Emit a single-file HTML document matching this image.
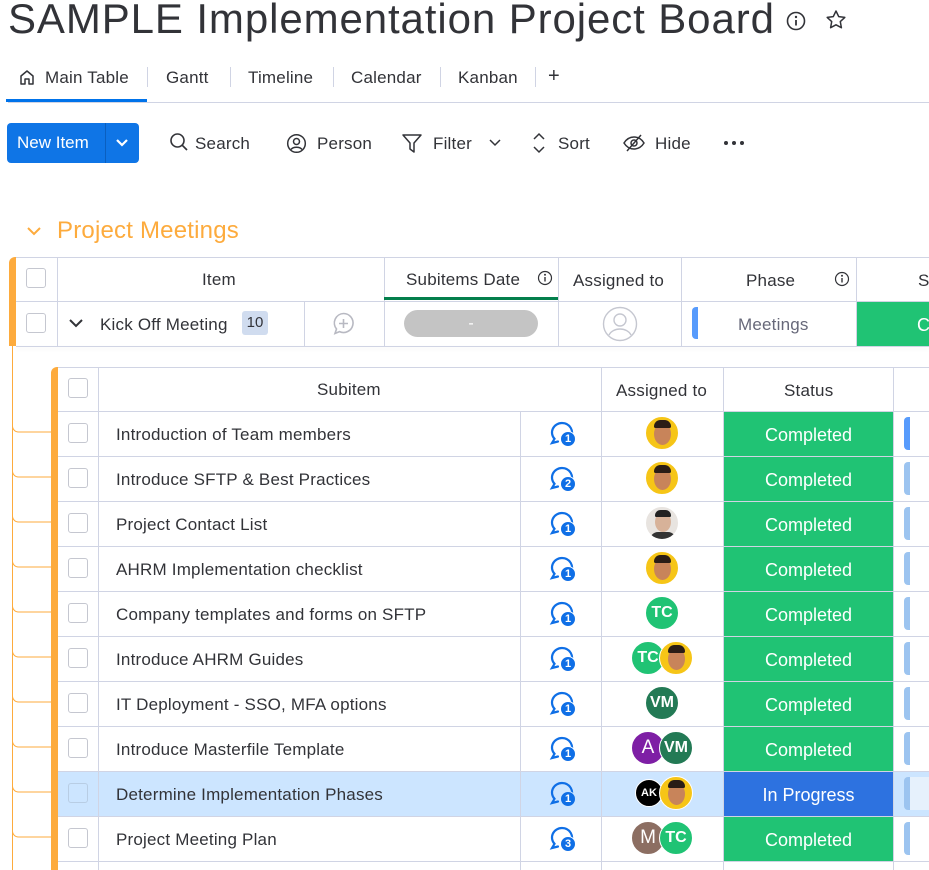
<!DOCTYPE html>
<html><head><meta charset="utf-8"><style>
*{box-sizing:border-box;margin:0;padding:0}
body{width:929px;height:870px;overflow:hidden;background:#fff;font-family:"Liberation Sans",sans-serif;color:#323338;position:relative}
.a{position:absolute}
.t{font-size:17px;color:#323338;white-space:nowrap;letter-spacing:0.2px}
.cb{position:absolute;width:20px;height:20px;border:1px solid #c5c7d0;border-radius:3px;background:#fff}
.vl{position:absolute;width:1px;background:#d0d4e4}
.hl{position:absolute;height:1px;background:#d0d4e4}
.st{position:absolute;background:#20c374;color:#fff;font-size:18px;display:flex;align-items:center;justify-content:center;padding-top:2px}
.av{position:absolute;width:34px;height:34px;border-radius:50%;color:#fff;font-weight:bold;font-size:16px;display:flex;align-items:center;justify-content:center;border:1px solid #fff}
.ph{background:#f6c517;overflow:hidden}
.ph:before{content:"";position:absolute;left:8px;top:6px;width:17px;height:22px;border-radius:50%;background:#c8845a}
.ph:after{content:"";position:absolute;left:8px;top:3px;width:17px;height:8px;border-radius:8px 8px 2px 2px;background:#2a1d16}
.bar{position:absolute;width:6px;border-radius:4px 0 0 4px;background:#9cc4f0}
.bd{position:absolute;left:12px;top:12px;width:16px;height:16px;border-radius:50%;background:#0f6fe6;border:1.5px solid #fff;color:#fff;font-size:11px;font-weight:bold;text-align:center;line-height:14px}
</style></head><body>
<div class="a" style="left:8px;top:-5px;font-size:42px;color:#323338;letter-spacing:0.9px">SAMPLE Implementation Project Board</div>
<svg class="a" style="left:785px;top:10px" width="22" height="22" viewBox="0 0 22 22"><circle cx="11" cy="11" r="8.5" fill="none" stroke="#323338" stroke-width="1.6"/><line x1="11" y1="10" x2="11" y2="15.5" stroke="#323338" stroke-width="1.8"/><circle cx="11" cy="7" r="1.2" fill="#323338"/></svg>
<svg class="a" style="left:824px;top:8px" width="24" height="24" viewBox="0 0 24 24"><path d="M12 3l2.7 5.6 6.1.8-4.5 4.2 1.1 6.1L12 16.8 6.6 19.7l1.1-6.1L3.2 9.4l6.1-.8z" fill="none" stroke="#323338" stroke-width="1.5" stroke-linejoin="round"/></svg>

<svg class="a" style="left:18px;top:68px" width="18" height="18" viewBox="0 0 18 18"><path d="M3 8l6-5 6 5v8h-4v-5H7v5H3z" fill="none" stroke="#323338" stroke-width="1.5" stroke-linejoin="round"/></svg>
<div class="a t" style="left:45px;top:68px">Main Table</div>
<div class="vl" style="left:147px;top:67px;height:20px"></div>
<div class="a t" style="left:166px;top:68px">Gantt</div>
<div class="vl" style="left:230px;top:67px;height:20px"></div>
<div class="a t" style="left:248px;top:68px">Timeline</div>
<div class="vl" style="left:333px;top:67px;height:20px"></div>
<div class="a t" style="left:351px;top:68px">Calendar</div>
<div class="vl" style="left:440px;top:67px;height:20px"></div>
<div class="a t" style="left:458px;top:68px">Kanban</div>
<div class="vl" style="left:535px;top:67px;height:20px"></div>
<div class="a t" style="left:548px;top:65px;font-size:20px">+</div>
<div class="hl" style="left:8px;top:102px;width:921px"></div>
<div class="a" style="left:6px;top:99px;width:141px;height:3px;background:#0073ea"></div>

<div class="a" style="left:7px;top:123px;width:132px;height:40px;background:#0f75e6;border-radius:4px"></div>
<div class="a" style="left:105px;top:123px;width:1px;height:40px;background:#0a5fc0"></div>
<div class="a" style="left:17px;top:133px;color:#fff;font-size:17px">New Item</div>
<svg class="a" style="left:114px;top:136px" width="16" height="14" viewBox="0 0 16 14"><path d="M3 4l5 5 5-5" fill="none" stroke="#fff" stroke-width="2.2"/></svg>
<svg class="a" style="left:169px;top:132px" width="20" height="20" viewBox="0 0 20 20"><circle cx="8.5" cy="8.5" r="6.5" fill="none" stroke="#323338" stroke-width="1.6"/><line x1="13.3" y1="13.3" x2="18" y2="18" stroke="#323338" stroke-width="1.7"/></svg>
<div class="a t" style="left:195px;top:134px">Search</div>
<svg class="a" style="left:286px;top:133px" width="21" height="21" viewBox="0 0 21 21"><circle cx="10.5" cy="10.5" r="8.8" fill="none" stroke="#323338" stroke-width="1.5"/><circle cx="10.5" cy="8.5" r="3" fill="none" stroke="#323338" stroke-width="1.5"/><path d="M5 16.5c2-3 9-3 11 0" fill="none" stroke="#323338" stroke-width="1.5"/></svg>
<div class="a t" style="left:317px;top:134px">Person</div>
<svg class="a" style="left:401px;top:132px" width="22" height="22" viewBox="0 0 22 22"><path d="M2 3h18l-7 8v9l-4-3v-6z" fill="none" stroke="#323338" stroke-width="1.5" stroke-linejoin="round"/></svg>
<div class="a t" style="left:433px;top:134px">Filter</div>
<svg class="a" style="left:488px;top:138px" width="14" height="10" viewBox="0 0 14 10"><path d="M2 2l5 5 5-5" fill="none" stroke="#323338" stroke-width="1.5"/></svg>
<svg class="a" style="left:531px;top:132px" width="16" height="22" viewBox="0 0 16 22"><path d="M3 7l5-5 5 5M3 15l5 5 5-5" fill="none" stroke="#323338" stroke-width="1.5"/></svg>
<div class="a t" style="left:558px;top:134px">Sort</div>
<svg class="a" style="left:622px;top:133px" width="24" height="20" viewBox="0 0 24 20"><path d="M2 10c5-8 15-8 20 0c-5 8-15 8-20 0z" fill="none" stroke="#323338" stroke-width="1.5"/><circle cx="12" cy="10" r="3" fill="none" stroke="#323338" stroke-width="1.5"/><line x1="5" y1="18" x2="19" y2="2" stroke="#323338" stroke-width="1.5"/></svg>
<div class="a t" style="left:655px;top:134px">Hide</div>
<div class="a" style="left:724px;top:141px;width:4px;height:4px;border-radius:50%;background:#323338"></div>
<div class="a" style="left:732px;top:141px;width:4px;height:4px;border-radius:50%;background:#323338"></div>
<div class="a" style="left:740px;top:141px;width:4px;height:4px;border-radius:50%;background:#323338"></div>

<svg class="a" style="left:26px;top:224px" width="16" height="14" viewBox="0 0 16 14"><path d="M2 4l6 6 6-6" fill="none" stroke="#fdab3d" stroke-width="2"/></svg>
<div class="a" style="left:57px;top:217px;font-size:24px;color:#fdab3d;letter-spacing:0.2px">Project Meetings</div>

<!-- top table -->
<div class="a" style="left:9px;top:257px;width:7px;height:89px;background:#fdab3d;border-radius:6px 0 0 0"></div>
<div class="hl" style="left:16px;top:257px;width:913px"></div>
<div class="hl" style="left:16px;top:301px;width:913px"></div>
<div class="hl" style="left:16px;top:346px;width:913px;box-shadow:0 2px 4px rgba(0,0,0,.08)"></div>
<div class="vl" style="left:57px;top:257px;height:89px"></div>
<div class="vl" style="left:304px;top:301px;height:45px"></div>
<div class="vl" style="left:384px;top:257px;height:89px"></div>
<div class="vl" style="left:558px;top:257px;height:89px"></div>
<div class="vl" style="left:681px;top:257px;height:89px"></div>
<div class="vl" style="left:856px;top:257px;height:89px"></div>
<div class="a" style="left:384px;top:297px;width:174px;height:3px;background:#037f4c"></div>
<div class="cb" style="left:26px;top:268px"></div>
<div class="cb" style="left:26px;top:313px"></div>
<div class="a t" style="left:202px;top:270px">Item</div>
<div class="a t" style="left:406px;top:270px">Subitems Date</div>
<svg class="a" style="left:537px;top:270px" width="16" height="16" viewBox="0 0 16 16"><circle cx="8" cy="8" r="6.5" fill="none" stroke="#323338" stroke-width="1.2"/><line x1="8" y1="7" x2="8" y2="11.5" stroke="#323338" stroke-width="1.4"/><circle cx="8" cy="4.8" r="1" fill="#323338"/></svg>
<div class="a t" style="left:573px;top:271px">Assigned to</div>
<div class="a t" style="left:746px;top:271px">Phase</div>
<svg class="a" style="left:834px;top:271px" width="16" height="16" viewBox="0 0 16 16"><circle cx="8" cy="8" r="6.5" fill="none" stroke="#323338" stroke-width="1.2"/><line x1="8" y1="7" x2="8" y2="11.5" stroke="#323338" stroke-width="1.4"/><circle cx="8" cy="4.8" r="1" fill="#323338"/></svg>
<div class="a t" style="left:918px;top:271px">S</div>
<svg class="a" style="left:68px;top:317px" width="16" height="12" viewBox="0 0 16 12"><path d="M2 3l6 6 6-6" fill="none" stroke="#323338" stroke-width="2"/></svg>
<div class="a t" style="left:100px;top:315px">Kick Off Meeting</div>
<div class="a" style="left:242px;top:311px;width:26px;height:24px;background:#d0dcef;border-radius:3px;font-size:15px;text-align:center;line-height:24px;color:#323338">10</div>
<svg class="a" style="left:331px;top:311px" width="25" height="25" viewBox="0 0 25 25"><path d="M12.5 2.5a9.5 9.5 0 1 1-4 18.1L4 22.5l1.5-4.5A9.5 9.5 0 0 1 12.5 2.5z" fill="none" stroke="#b8b9c2" stroke-width="1.6"/><path d="M12.5 8v9M8 12.5h9" stroke="#b8b9c2" stroke-width="1.6"/></svg>
<div class="a" style="left:404px;top:310px;width:134px;height:27px;background:#c4c4c4;border-radius:14px;color:#fff;text-align:center;line-height:27px;font-size:16px">-</div>
<svg class="a" style="left:602px;top:306px" width="36" height="36" viewBox="0 0 36 36"><circle cx="18" cy="18" r="16.5" fill="none" stroke="#c5c7d0" stroke-width="1.4"/><circle cx="18" cy="14" r="6" fill="none" stroke="#c5c7d0" stroke-width="1.4"/><path d="M7 29c4-8 18-8 22 0" fill="none" stroke="#c5c7d0" stroke-width="1.4"/></svg>
<div class="bar" style="left:692px;top:307px;height:32px;background:#579bfc"></div>
<div class="a t" style="left:738px;top:315px;color:#676879">Meetings</div>
<div class="st" style="left:857px;top:302px;width:72px;height:44px;justify-content:flex-start;padding-left:60px">Co</div>

<!-- tree -->
<div class="a" style="left:12px;top:346px;width:1px;height:524px;background:#fdab3d"></div>
<svg class="a" style="left:12px;top:346px" width="40" height="524" viewBox="0 0 40 524" fill="none" stroke="#fdab3d" stroke-width="1">
<path d="M0.5 70v10a6 6 0 0 0 6 6H39"/><path d="M0.5 115v10a6 6 0 0 0 6 6H39"/><path d="M0.5 160v10a6 6 0 0 0 6 6H39"/><path d="M0.5 205v10a6 6 0 0 0 6 6H39"/><path d="M0.5 250v10a6 6 0 0 0 6 6H39"/><path d="M0.5 295v10a6 6 0 0 0 6 6H39"/><path d="M0.5 340v10a6 6 0 0 0 6 6H39"/><path d="M0.5 385v10a6 6 0 0 0 6 6H39"/><path d="M0.5 430v10a6 6 0 0 0 6 6H39"/><path d="M0.5 475v10a6 6 0 0 0 6 6H39"/>
</svg>

<!-- subtable -->
<div class="a" style="left:51px;top:367px;width:7px;height:503px;background:#fdab3d;border-radius:6px 0 0 0"></div>
<div class="a" style="left:58px;top:771px;width:871px;height:45px;background:#cce5ff"></div>
<div class="hl" style="left:58px;top:367px;width:871px"></div>
<div class="hl" style="left:58px;top:411px;width:871px"></div>
<div class="hl" style="left:58px;top:456px;width:871px"></div>
<div class="hl" style="left:58px;top:501px;width:871px"></div>
<div class="hl" style="left:58px;top:546px;width:871px"></div>
<div class="hl" style="left:58px;top:591px;width:871px"></div>
<div class="hl" style="left:58px;top:636px;width:871px"></div>
<div class="hl" style="left:58px;top:681px;width:871px"></div>
<div class="hl" style="left:58px;top:726px;width:871px"></div>
<div class="hl" style="left:58px;top:771px;width:871px"></div>
<div class="hl" style="left:58px;top:816px;width:871px"></div>
<div class="hl" style="left:58px;top:861px;width:871px"></div>
<div class="vl" style="left:98px;top:367px;height:503px"></div>
<div class="vl" style="left:520px;top:411px;height:459px"></div>
<div class="vl" style="left:601px;top:367px;height:503px"></div>
<div class="vl" style="left:723px;top:367px;height:503px"></div>
<div class="vl" style="left:893px;top:367px;height:503px"></div>
<div class="cb" style="left:68px;top:378px"></div>
<div class="a t" style="left:317px;top:380px">Subitem</div>
<div class="a t" style="left:616px;top:381px">Assigned to</div>
<div class="a t" style="left:784px;top:381px">Status</div>

<!-- rows -->
<div class="cb" style="left:68px;top:423px"></div><div class="a t" style="left:116px;top:425px">Introduction of Team members</div>
<div class="cb" style="left:68px;top:468px"></div><div class="a t" style="left:116px;top:470px">Introduce SFTP &amp; Best Practices</div>
<div class="cb" style="left:68px;top:513px"></div><div class="a t" style="left:116px;top:515px">Project Contact List</div>
<div class="cb" style="left:68px;top:558px"></div><div class="a t" style="left:116px;top:560px">AHRM Implementation checklist</div>
<div class="cb" style="left:68px;top:603px"></div><div class="a t" style="left:116px;top:605px">Company templates and forms on SFTP</div>
<div class="cb" style="left:68px;top:648px"></div><div class="a t" style="left:116px;top:650px">Introduce AHRM Guides</div>
<div class="cb" style="left:68px;top:693px"></div><div class="a t" style="left:116px;top:695px">IT Deployment - SSO, MFA options</div>
<div class="cb" style="left:68px;top:738px"></div><div class="a t" style="left:116px;top:740px">Introduce Masterfile Template</div>
<div class="cb" style="left:68px;top:783px;background:#cce5ff;border-color:#b8cde4"></div><div class="a t" style="left:116px;top:785px">Determine Implementation Phases</div>
<div class="cb" style="left:68px;top:828px"></div><div class="a t" style="left:116px;top:830px">Project Meeting Plan</div>

<!-- status -->
<div class="st" style="left:724px;top:412px;width:169px;height:44px">Completed</div>
<div class="st" style="left:724px;top:457px;width:169px;height:44px">Completed</div>
<div class="st" style="left:724px;top:502px;width:169px;height:44px">Completed</div>
<div class="st" style="left:724px;top:547px;width:169px;height:44px">Completed</div>
<div class="st" style="left:724px;top:592px;width:169px;height:44px">Completed</div>
<div class="st" style="left:724px;top:637px;width:169px;height:44px">Completed</div>
<div class="st" style="left:724px;top:682px;width:169px;height:44px">Completed</div>
<div class="st" style="left:724px;top:727px;width:169px;height:44px">Completed</div>
<div class="st" style="left:724px;top:772px;width:169px;height:44px;background:#2d72e0">In Progress</div>
<div class="st" style="left:724px;top:817px;width:169px;height:44px">Completed</div>

<!-- bars -->
<div class="bar" style="left:904px;top:417px;height:33px;background:#579bfc"></div>
<div class="bar" style="left:904px;top:462px;height:33px"></div>
<div class="bar" style="left:904px;top:507px;height:33px"></div>
<div class="bar" style="left:904px;top:552px;height:33px"></div>
<div class="bar" style="left:904px;top:597px;height:33px"></div>
<div class="bar" style="left:904px;top:642px;height:33px"></div>
<div class="bar" style="left:904px;top:687px;height:33px"></div>
<div class="bar" style="left:904px;top:732px;height:33px"></div>
<div class="a" style="left:904px;top:777px;width:25px;height:33px;background:#e6f1fc;border-left:6px solid #9cc4f0;border-radius:4px 0 0 4px"></div>
<div class="bar" style="left:904px;top:822px;height:33px"></div>

<!-- chat icons -->
<svg width="0" height="0" style="position:absolute"><defs><symbol id="ch" viewBox="0 0 30 30"><path d="M14 4a10 9.5 0 0 1 8.5 14.5M14 4a10 9.5 0 0 0-7.5 15.8L4 24l6-1.5" fill="none" stroke="#0f6fe6" stroke-width="2.2" stroke-linecap="round"/></symbol></defs></svg>
<div class="a" style="left:548px;top:419px"><svg width="30" height="30"><use href="#ch"/></svg><div class="bd">1</div></div>
<div class="a" style="left:548px;top:464px"><svg width="30" height="30"><use href="#ch"/></svg><div class="bd">2</div></div>
<div class="a" style="left:548px;top:509px"><svg width="30" height="30"><use href="#ch"/></svg><div class="bd">1</div></div>
<div class="a" style="left:548px;top:554px"><svg width="30" height="30"><use href="#ch"/></svg><div class="bd">1</div></div>
<div class="a" style="left:548px;top:599px"><svg width="30" height="30"><use href="#ch"/></svg><div class="bd">1</div></div>
<div class="a" style="left:548px;top:644px"><svg width="30" height="30"><use href="#ch"/></svg><div class="bd">1</div></div>
<div class="a" style="left:548px;top:689px"><svg width="30" height="30"><use href="#ch"/></svg><div class="bd">1</div></div>
<div class="a" style="left:548px;top:734px"><svg width="30" height="30"><use href="#ch"/></svg><div class="bd">1</div></div>
<div class="a" style="left:548px;top:779px"><svg width="30" height="30"><use href="#ch"/></svg><div class="bd" style="border-color:#cce5ff">1</div></div>
<div class="a" style="left:548px;top:824px"><svg width="30" height="30"><use href="#ch"/></svg><div class="bd">3</div></div>

<!-- avatars -->
<div class="av ph" style="left:645px;top:416px"></div>
<div class="av ph" style="left:645px;top:461px"></div>
<div class="av" style="left:645px;top:506px;background:#e8e4e0;overflow:hidden"><div class="a" style="left:9px;top:5px;width:16px;height:20px;border-radius:50%;background:#d7b299"></div><div class="a" style="left:9px;top:3px;width:16px;height:7px;border-radius:8px 8px 2px 2px;background:#222"></div><div class="a" style="left:4px;top:25px;width:26px;height:12px;border-radius:8px 8px 0 0;background:#333"></div></div>
<div class="av ph" style="left:645px;top:551px"></div>
<div class="av" style="left:645px;top:596px;background:#20c374">TC</div>
<div class="av" style="left:631px;top:641px;background:#20c374">TC</div>
<div class="av ph" style="left:659px;top:641px"></div>
<div class="av" style="left:645px;top:686px;background:#237a55">VM</div>
<div class="av" style="left:631px;top:731px;background:#7e1fa5;font-weight:normal;font-size:19px">A</div>
<div class="av" style="left:659px;top:731px;background:#237a55">VM</div>
<div class="av" style="left:635px;top:779px;width:28px;height:28px;background:#000;font-size:11px">AK</div>
<div class="av ph" style="left:659px;top:776px"></div>
<div class="av" style="left:631px;top:821px;background:#8c6e62;font-weight:normal;font-size:19px">M</div>
<div class="av" style="left:659px;top:821px;background:#20c374">TC</div>
</body></html>
